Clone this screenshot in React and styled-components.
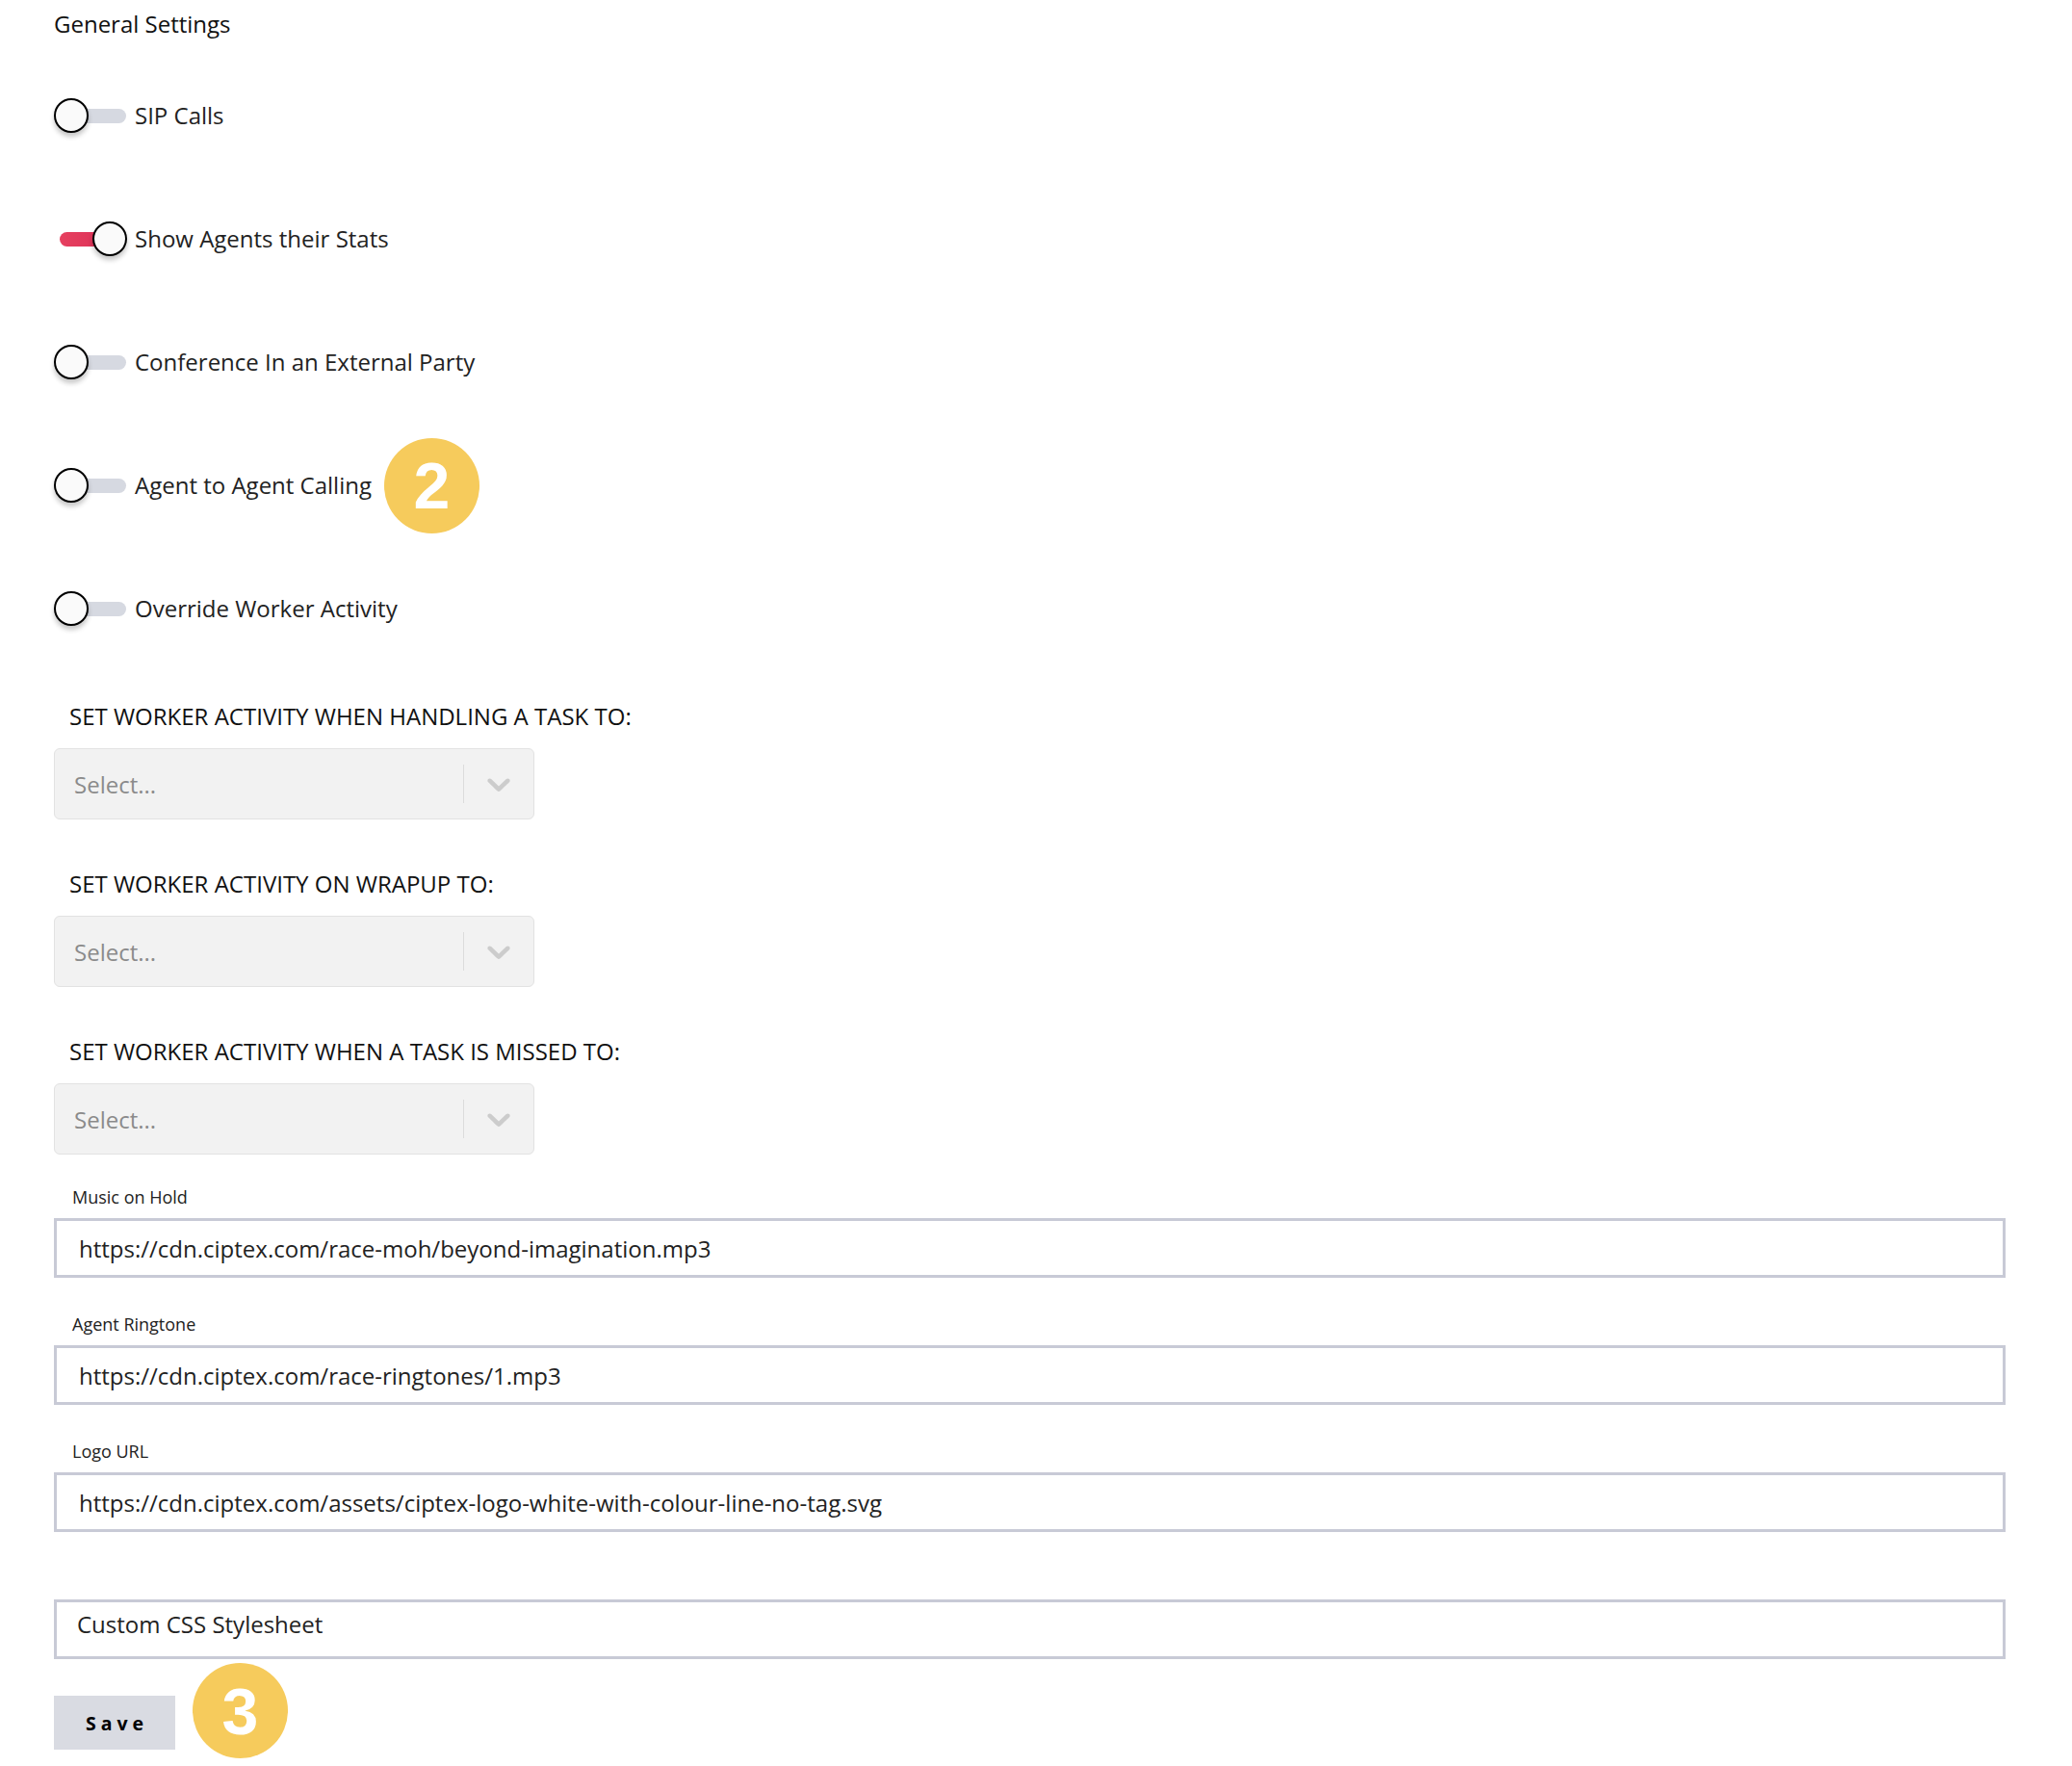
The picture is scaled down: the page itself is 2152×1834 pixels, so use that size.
import React from 'react'
import styled, { createGlobalStyle, css } from 'styled-components'

const GlobalStyle = createGlobalStyle`
  * {
    box-sizing: border-box;
  }

  body {
    margin: 0;
    background: #fff;
    color: #222;
    font-family: 'Open Sans', 'Liberation Sans', sans-serif;
  }
`

const Page = styled.div`
  padding: 7px 69px 0 56px;
`

const Title = styled.h2`
  margin: 0;
  font-size: 24px;
  line-height: 36px;
  font-weight: 400;
  color: #111;
`

const ToggleList = styled.div`
  display: flex;
  flex-direction: column;
  gap: 92px;
  margin-top: 59px;
`

const ToggleRow = styled.label`
  display: flex;
  align-items: center;
  gap: 8px;
  height: 36px;
  font-size: 24px;
  line-height: 36px;
  color: #222;
`

const Switch = styled.span`
  position: relative;
  flex: none;
  width: 76px;
  height: 36px;
`

const Track = styled.span`
  position: absolute;
  left: 6px;
  top: 10.5px;
  width: 69px;
  height: 15px;
  border-radius: 8px;
  background: ${props => props.$on
    ? 'linear-gradient(90deg, #e6405f, #d92b55)'
    : '#d6d9e1'};
`

const Knob = styled.span`
  position: absolute;
  top: 0;
  left: ${props => props.$on ? 40 : 0}px;
  width: 36px;
  height: 36px;
  border-radius: 50%;
  border: 2.5px solid #000;
  background: #fafafa;
  box-shadow: 0 4px 5px rgba(0, 0, 0, 0.22);
`

const Badge = styled.span`
  display: inline-flex;
  flex: none;
  align-items: center;
  justify-content: center;
  width: 99px;
  height: 99px;
  margin-left: ${props => props.$offset || 0}px;
  border-radius: 50%;
  background: #f6cb5c;
  color: #fff;
  font-family: 'Liberation Sans', Arial, sans-serif;
  font-weight: 700;
  font-size: 68px;
  line-height: 1;
`

const ActivityList = styled.div`
  display: flex;
  flex-direction: column;
  gap: 49px;
  margin-top: 76px;
`

const ActivityGroup = styled.div`
  display: flex;
  flex-direction: column;
  gap: 15px;
`

const SectionLabel = styled.div`
  margin-left: 16px;
  font-size: 24px;
  line-height: 36px;
  color: #111;
`

const SelectBox = styled.div`
  display: flex;
  align-items: center;
  width: 499px;
  height: 74px;
  border: 1.5px solid #e2e2e2;
  border-radius: 6px;
  background: #f2f2f2;
`

const Placeholder = styled.span`
  flex: 1;
  padding-left: 20px;
  font-size: 24px;
  color: #8b8b8b;
`

const Separator = styled.span`
  width: 1.5px;
  height: 40px;
  background: #dcdcdc;
`

const Indicator = styled.span`
  display: flex;
  align-items: center;
  justify-content: center;
  width: 72px;
  color: #cccccc;
`

const FieldList = styled.div`
  display: flex;
  flex-direction: column;
  gap: 35px;
  margin-top: 31px;
`

const Field = styled.div`
  display: flex;
  flex-direction: column;
  gap: 8px;
`

const FieldLabel = styled.div`
  height: 27px;
  margin-left: 19px;
  font-size: 18px;
  line-height: 27px;
  color: #222;
`

const boxStyles = css`
  display: block;
  width: 100%;
  height: 62px;
  border: 3px solid #c8cad6;
  border-radius: 0;
  outline: none;
  background: #fff;
  font-family: 'Open Sans', sans-serif;
  font-size: 24px;
  color: #222;

  &::placeholder {
    color: #222;
    opacity: 1;
  }
`

const TextInput = styled.input`
  ${boxStyles}
  padding: 0 23px;
`

const TextArea = styled.textarea`
  ${boxStyles}
  padding: 5px 21px;
  line-height: 36px;
  resize: none;
  overflow: hidden;
`

const Actions = styled.div`
  display: flex;
  align-items: flex-start;
  gap: 18px;
  margin-top: 4px;
`

const SaveButton = styled.button`
  width: 126px;
  height: 56px;
  margin-top: 34px;
  padding: 0 0 0 5px;
  border: none;
  background: #d9dbe2;
  color: #000;
  font-family: 'Open Sans', sans-serif;
  font-weight: 700;
  font-size: 19.5px;
  letter-spacing: 5px;
`

const Chevron = () => (
  <svg width='40' height='40' viewBox='0 0 20 20' fill='currentColor'>
    <path d='M4.516 7.548c0.436-0.446 1.043-0.481 1.576 0l3.908 3.747 3.908-3.747c0.533-0.481 1.141-0.446 1.574 0 0.436 0.445 0.408 1.197 0 1.615-0.406 0.418-4.695 4.502-4.695 4.502-0.217 0.223-0.502 0.335-0.787 0.335s-0.57-0.112-0.789-0.335c0 0-4.287-4.084-4.695-4.502s-0.436-1.17 0-1.615z' />
  </svg>
)

const toggles = [
  { label: 'SIP Calls', on: false },
  { label: 'Show Agents their Stats', on: true },
  { label: 'Conference In an External Party', on: false },
  { label: 'Agent to Agent Calling', on: false, badge: '2' },
  { label: 'Override Worker Activity', on: false }
]

const activities = [
  'SET WORKER ACTIVITY WHEN HANDLING A TASK TO:',
  'SET WORKER ACTIVITY ON WRAPUP TO:',
  'SET WORKER ACTIVITY WHEN A TASK IS MISSED TO:'
]

const fields = [
  { label: 'Music on Hold', value: 'https://cdn.ciptex.com/race-moh/beyond-imagination.mp3' },
  { label: 'Agent Ringtone', value: 'https://cdn.ciptex.com/race-ringtones/1.mp3' },
  { label: 'Logo URL', value: 'https://cdn.ciptex.com/assets/ciptex-logo-white-with-colour-line-no-tag.svg' }
]

export default function App () {
  return (
    <Page>
      <GlobalStyle />
      <Title>General Settings</Title>

      <ToggleList>
        {toggles.map(t => (
          <ToggleRow key={t.label}>
            <Switch>
              <Track $on={t.on} />
              <Knob $on={t.on} />
            </Switch>
            {t.label}
            {t.badge && <Badge $offset={5}>{t.badge}</Badge>}
          </ToggleRow>
        ))}
      </ToggleList>

      <ActivityList>
        {activities.map(a => (
          <ActivityGroup key={a}>
            <SectionLabel>{a}</SectionLabel>
            <SelectBox>
              <Placeholder>Select...</Placeholder>
              <Separator />
              <Indicator><Chevron /></Indicator>
            </SelectBox>
          </ActivityGroup>
        ))}
      </ActivityList>

      <FieldList>
        {fields.map(f => (
          <Field key={f.label}>
            <FieldLabel>{f.label}</FieldLabel>
            <TextInput defaultValue={f.value} />
          </Field>
        ))}
        <Field>
          <FieldLabel />
          <TextArea placeholder='Custom CSS Stylesheet' />
        </Field>
      </FieldList>

      <Actions>
        <SaveButton>Save</SaveButton>
        <Badge>3</Badge>
      </Actions>
    </Page>
  )
}
